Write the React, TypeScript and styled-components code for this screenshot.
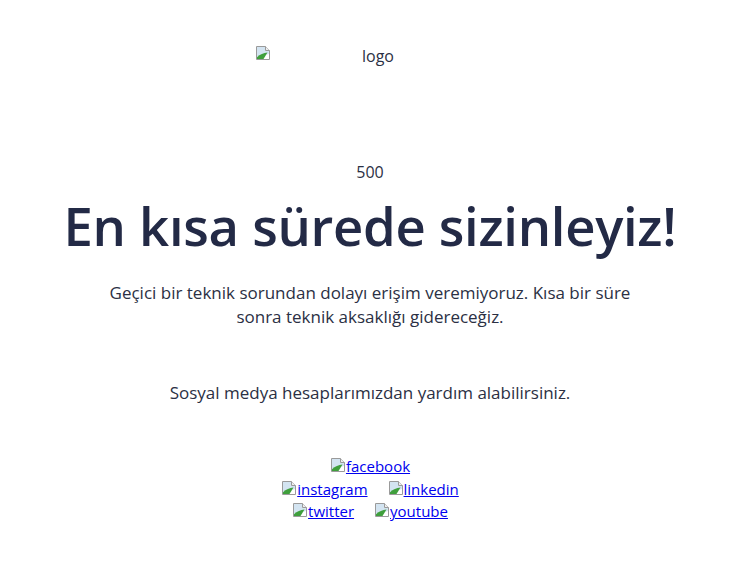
import styled, { createGlobalStyle } from 'styled-components';

const GlobalStyle = createGlobalStyle`
  body {
    margin: 0;
    background: #ffffff;
    font-family: "Open Sans", "Liberation Sans", sans-serif;
    color: #2b3044;
  }
`;

// Chrome's broken-image placeholder, drawn by hand
const BrokenImage = () => (
  <svg width={16} height={16} viewBox="0 0 16 16" xmlns="http://www.w3.org/2000/svg">
    <path d="M1.5 1.5h9l4 4v9h-13z" fill="#ffffff" stroke="#9a9a9a" />
    <path d="M2 2h8.3v3.7H14V9L2 12.5z" fill="#d3e4f1" />
    <path d="M2 14V12.2C5 9.6 8.5 8 12.5 7.6L8.5 14z" fill="#3f9f3c" />
    <path d="M10.5 1.5v4h4" fill="#eeeeee" stroke="#9a9a9a" />
  </svg>
);

const Page = styled.main`
  display: flex;
  flex-direction: column;
  align-items: center;
  text-align: center;
  padding: 45px 6px 0 0;
`;

const Logo = styled.div`
  display: flex;
  width: 230px;
  height: 90px;
  font-size: 16px;
  line-height: 22px;
  color: #2b3044;
`;

const LogoAlt = styled.span`
  flex: 1;
  text-align: center;
`;

const Code = styled.div`
  margin-top: 26px;
  font-size: 16px;
  line-height: 22px;
  color: #2b3044;
`;

const Title = styled.h1`
  margin: 10px 0 0;
  font-size: 52.6px;
  line-height: 66px;
  font-weight: 600;
  color: #232a46;
  letter-spacing: -0.3px;
`;

const Text = styled.p`
  margin: 22px 0 0;
  max-width: 540px;
  font-size: 17px;
  line-height: 24px;
  color: #2b3044;
`;

const Note = styled(Text)`
  margin-top: 52px;
`;

const Socials = styled.nav`
  margin-top: 50px;
  display: flex;
  flex-direction: column;
  align-items: center;
`;

const SocialRow = styled.div`
  display: flex;
  gap: 20px;
  line-height: 22.5px;
`;

const SocialLink = styled.a`
  display: inline-flex;
  align-items: flex-start;
  font-size: 15px;
  color: #0000ee;

  svg {
    margin-top: 2px;
  }
`;

const Social = ({ name }: { name: string }) => (
  <SocialLink href="#">
    <BrokenImage />
    {name}
  </SocialLink>
);

export default function App() {
  return (
    <>
      <GlobalStyle />
      <Page>
        <Logo>
          <BrokenImage />
          <LogoAlt>logo</LogoAlt>
        </Logo>
        <Code>500</Code>
        <Title>En kısa sürede sizinleyiz!</Title>
        <Text>
          Geçici bir teknik sorundan dolayı erişim veremiyoruz. Kısa bir süre sonra teknik
          aksaklığı gidereceğiz.
        </Text>
        <Note>Sosyal medya hesaplarımızdan yardım alabilirsiniz.</Note>
        <Socials>
          <SocialRow>
            <Social name="facebook" />
          </SocialRow>
          <SocialRow>
            <Social name="instagram" />
            <Social name="linkedin" />
          </SocialRow>
          <SocialRow>
            <Social name="twitter" />
            <Social name="youtube" />
          </SocialRow>
        </Socials>
      </Page>
    </>
  );
}
